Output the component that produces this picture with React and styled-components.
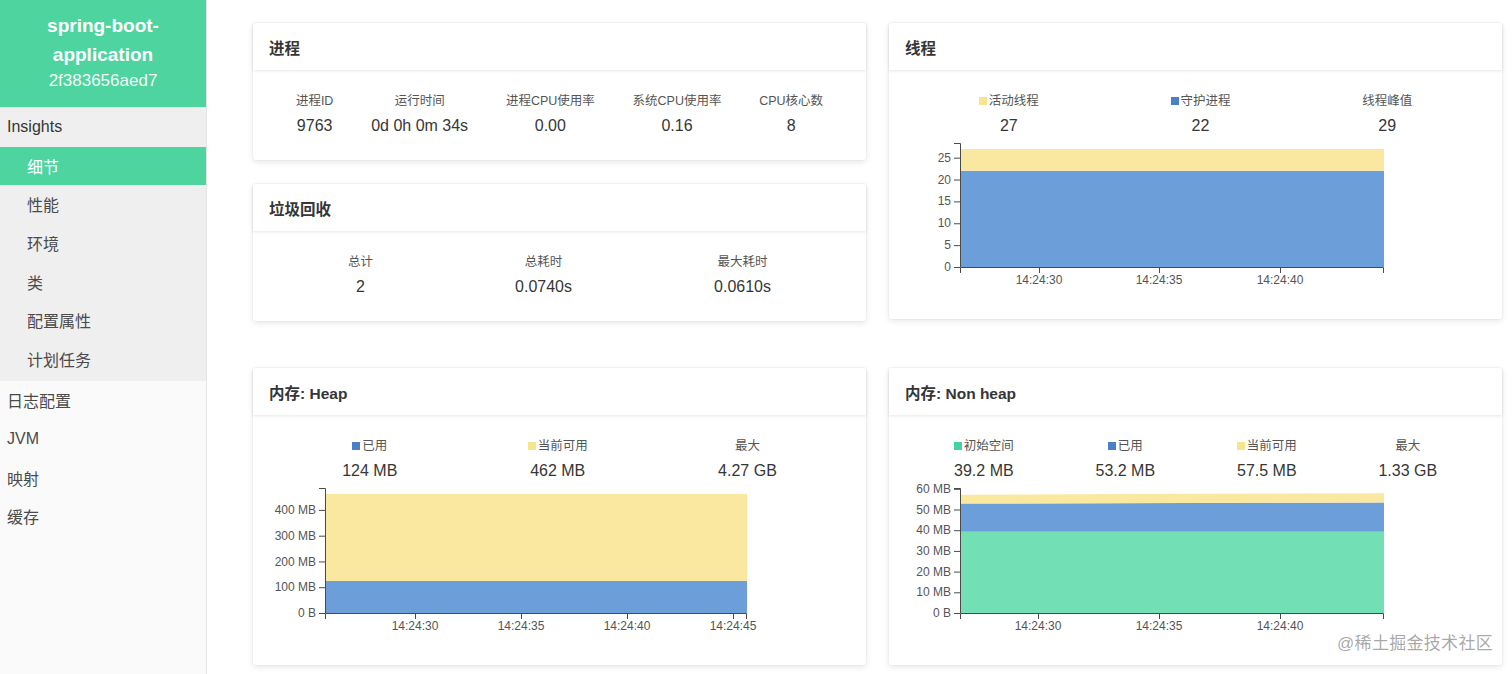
import React from "react";
import styled, { createGlobalStyle } from "styled-components";

const GlobalStyle = createGlobalStyle`
  html, body {
    margin: 0;
    padding: 0;
    background: #fff;
    font-family: "Liberation Sans", "Noto Sans CJK SC", sans-serif;
    color: #363636;
  }
`;

const COLORS = {
  green: "#4dd49f",
  blueArea: "#6c9fda",
  yellowArea: "#fbe8a0",
  greenArea: "#72dfb5",
  blueKey: "#4b80c6",
  yellowKey: "#f6e48e",
  greenKey: "#45d1a2",
};

const Page = styled.div`
  display: flex;
  width: 1512px;
  height: 674px;
  overflow: hidden;
  position: relative;
`;

const Sidebar = styled.aside`
  width: 206px;
  flex: none;
  background: #fafafa;
  border-right: 1px solid #e6e6e6;
  display: flex;
  flex-direction: column;
`;

const Brand = styled.div`
  background: ${COLORS.green};
  color: #fff;
  text-align: center;
  padding: 11px 20px 14px;
  height: 108px;
  box-sizing: border-box;
  border-bottom: 1px solid #e8e8e8;
`;

const BrandName = styled.div`
  font-size: 19px;
  font-weight: 700;
  line-height: 29px;
`;

const BrandId = styled.div`
  font-size: 17px;
  line-height: 23px;
  opacity: 0.92;
`;

const Group = styled.div`
  background: #efefef;
  padding-bottom: 3px;
`;

const NavItem = styled.div`
  height: 38.6px;
  display: flex;
  align-items: center;
  padding-left: ${(p) => (p.$sub ? 27 : 7)}px;
  font-size: 16px;
  color: ${(p) => (p.$active ? "#fff" : p.$heading ? "#363636" : "#4a4a4a")};
  background: ${(p) => (p.$active ? COLORS.green : "transparent")};
  font-weight: ${(p) => (p.$heading ? 500 : 400)};
`;

const Main = styled.main`
  flex: 1;
  padding: 23px 10px 0 46px;
  display: grid;
  grid-template-columns: 613px 613px;
  column-gap: 23px;
  row-gap: 47px;
  align-content: start;
  align-items: start;
`;

const Column = styled.div`
  display: flex;
  flex-direction: column;
  gap: 24px;
`;

const Card = styled.section`
  background: #fff;
  border-radius: 3px;
  box-shadow: 0 2px 6px rgba(10, 10, 10, 0.1), 0 0 0 1px rgba(10, 10, 10, 0.02);
`;

const CardHeader = styled.header`
  height: 47px;
  display: flex;
  align-items: center;
  padding-left: 16px;
  font-size: 15.5px;
  font-weight: 700;
  color: #363636;
  box-shadow: 0 1px 3px rgba(10, 10, 10, 0.1);
`;

const CardBody = styled.div`
  padding: 22px 24px 22px;
`;

const Stats = styled.div`
  display: flex;
  align-items: flex-start;
`;

const Stat = styled.div`
  flex: 1 1 auto;
  text-align: center;
`;

const StatLabel = styled.div`
  font-size: 12.5px;
  line-height: 18px;
  color: #555;
  white-space: nowrap;
  display: flex;
  justify-content: center;
  align-items: center;
  gap: 2px;
`;

const StatValue = styled.div`
  font-size: 16px;
  line-height: 24px;
  margin-top: 4px;
  color: #363636;
  white-space: nowrap;
`;

const Key = styled.span`
  width: 8px;
  height: 8px;
  background: ${(p) => p.$color};
  display: inline-block;
`;

const ChartSvg = styled.svg`
  display: block;
  margin-top: 2px;
  overflow: visible;
`;

const Watermark = styled.div`
  position: absolute;
  right: 19px;
  bottom: 20px;
  font-size: 17px;
  color: rgba(140, 140, 140, 0.75);
  text-shadow: 0 0 2px #fff;
  letter-spacing: 0.3px;
`;

function StatRow({ items }) {
  return (
    <Stats>
      {items.map((it) => (
        <Stat key={it.label}>
          <StatLabel>
            {it.color && <Key $color={it.color} />}
            {it.label}
          </StatLabel>
          <StatValue>{it.value}</StatValue>
        </Stat>
      ))}
    </Stats>
  );
}

function AreaChart({ width, height, left, right, top, bottom, yMax, yTicks, xTicks, layers }) {
  const y = (v) => bottom - (v * (bottom - top)) / yMax;
  let prev = [0, 0];
  const polys = layers.map((l) => {
    const pts = [
      [left, y(prev[0])],
      [left, y(l.values[0])],
      [right, y(l.values[1])],
      [right, y(prev[1])],
    ];
    prev = l.values;
    return { color: l.color, pts: pts.map((p) => p.join(",")).join(" ") };
  });
  const axis = "#4a4a4a";
  return (
    <ChartSvg width={width} height={height}>
      {polys.map((p, i) => (
        <polygon key={i} points={p.pts} fill={p.color} />
      ))}
      <path d={`M${left - 6},${top + 0.5}H${left + 0.5}V${bottom + 0.5}`} stroke={axis} fill="none" />
      {yTicks.map((t) => (
        <g key={t.label}>
          <line x1={left - 6} x2={left} y1={y(t.v) + 0.5} y2={y(t.v) + 0.5} stroke={axis} />
          <text x={left - 9} y={y(t.v)} dy="0.34em" textAnchor="end" fontSize="12" fill="#555">
            {t.label}
          </text>
        </g>
      ))}
      <path d={`M${left + 0.5},${bottom + 6}V${bottom + 0.5}H${right - 0.5}V${bottom + 6}`} stroke={axis} fill="none" />
      {xTicks.map((t) => (
        <g key={t.label}>
          <line x1={t.x + 0.5} x2={t.x + 0.5} y1={bottom} y2={bottom + 6} stroke={axis} />
          <text x={t.x} y={bottom + 17} textAnchor="middle" fontSize="12" fill="#555">
            {t.label}
          </text>
        </g>
      ))}
    </ChartSvg>
  );
}

const mb = (n) => (n === 0 ? "0 B" : `${n} MB`);

export default function App() {
  return (
    <>
      <GlobalStyle />
      <Page>
        <Sidebar>
          <Brand>
            <BrandName>spring-boot-application</BrandName>
            <BrandId>2f383656aed7</BrandId>
          </Brand>
          <Group>
            <NavItem $heading>Insights</NavItem>
            <NavItem $sub $active>细节</NavItem>
            <NavItem $sub>性能</NavItem>
            <NavItem $sub>环境</NavItem>
            <NavItem $sub>类</NavItem>
            <NavItem $sub>配置属性</NavItem>
            <NavItem $sub>计划任务</NavItem>
          </Group>
          <NavItem>日志配置</NavItem>
          <NavItem>JVM</NavItem>
          <NavItem>映射</NavItem>
          <NavItem>缓存</NavItem>
        </Sidebar>

        <Main>
          <Column>
            <Card>
              <CardHeader>进程</CardHeader>
              <CardBody>
                <StatRow
                  items={[
                    { label: "进程ID", value: "9763" },
                    { label: "运行时间", value: "0d 0h 0m 34s" },
                    { label: "进程CPU使用率", value: "0.00" },
                    { label: "系统CPU使用率", value: "0.16" },
                    { label: "CPU核心数", value: "8" },
                  ]}
                />
              </CardBody>
            </Card>
            <Card>
              <CardHeader>垃圾回收</CardHeader>
              <CardBody>
                <StatRow
                  items={[
                    { label: "总计", value: "2" },
                    { label: "总耗时", value: "0.0740s" },
                    { label: "最大耗时", value: "0.0610s" },
                  ]}
                />
              </CardBody>
            </Card>
          </Column>

          <Card>
            <CardHeader>线程</CardHeader>
            <CardBody>
              <StatRow
                items={[
                  { label: "活动线程", value: "27", color: COLORS.yellowKey },
                  { label: "守护进程", value: "22", color: COLORS.blueKey },
                  { label: "线程峰值", value: "29" },
                ]}
              />
              <AreaChart
                width={565}
                height={157}
                left={47}
                right={471}
                top={3}
                bottom={127}
                yMax={28.35}
                yTicks={[0, 5, 10, 15, 20, 25].map((v) => ({ v, label: String(v) }))}
                xTicks={[
                  { x: 126, label: "14:24:30" },
                  { x: 246, label: "14:24:35" },
                  { x: 367, label: "14:24:40" },
                ]}
                layers={[
                  { values: [22, 22], color: COLORS.blueArea },
                  { values: [27, 27], color: COLORS.yellowArea },
                ]}
              />
            </CardBody>
          </Card>

          <Card>
            <CardHeader>内存: Heap</CardHeader>
            <CardBody>
              <StatRow
                items={[
                  { label: "已用", value: "124 MB", color: COLORS.blueKey },
                  { label: "当前可用", value: "462 MB", color: COLORS.yellowKey },
                  { label: "最大", value: "4.27 GB" },
                ]}
              />
              <AreaChart
                width={565}
                height={158}
                left={48}
                right={470}
                top={3}
                bottom={128}
                yMax={485.1}
                yTicks={[0, 100, 200, 300, 400].map((v) => ({ v, label: mb(v) }))}
                xTicks={[
                  { x: 138, label: "14:24:30" },
                  { x: 244, label: "14:24:35" },
                  { x: 350, label: "14:24:40" },
                  { x: 456, label: "14:24:45" },
                ]}
                layers={[
                  { values: [124, 124], color: COLORS.blueArea },
                  { values: [462, 462], color: COLORS.yellowArea },
                ]}
              />
            </CardBody>
          </Card>

          <Card>
            <CardHeader>内存: Non heap</CardHeader>
            <CardBody>
              <StatRow
                items={[
                  { label: "初始空间", value: "39.2 MB", color: COLORS.greenKey },
                  { label: "已用", value: "53.2 MB", color: COLORS.blueKey },
                  { label: "当前可用", value: "57.5 MB", color: COLORS.yellowKey },
                  { label: "最大", value: "1.33 GB" },
                ]}
              />
              <AreaChart
                width={565}
                height={158}
                left={47}
                right={471}
                top={3}
                bottom={128}
                yMax={60.4}
                yTicks={[0, 10, 20, 30, 40, 50, 60].map((v) => ({ v, label: mb(v) }))}
                xTicks={[
                  { x: 125, label: "14:24:30" },
                  { x: 246, label: "14:24:35" },
                  { x: 367, label: "14:24:40" },
                ]}
                layers={[
                  { values: [39.2, 39.2], color: COLORS.greenArea },
                  { values: [52.9, 53.4], color: COLORS.blueArea },
                  { values: [57.1, 57.9], color: COLORS.yellowArea },
                ]}
              />
            </CardBody>
          </Card>
        </Main>
        <Watermark>@稀土掘金技术社区</Watermark>
      </Page>
    </>
  );
}
